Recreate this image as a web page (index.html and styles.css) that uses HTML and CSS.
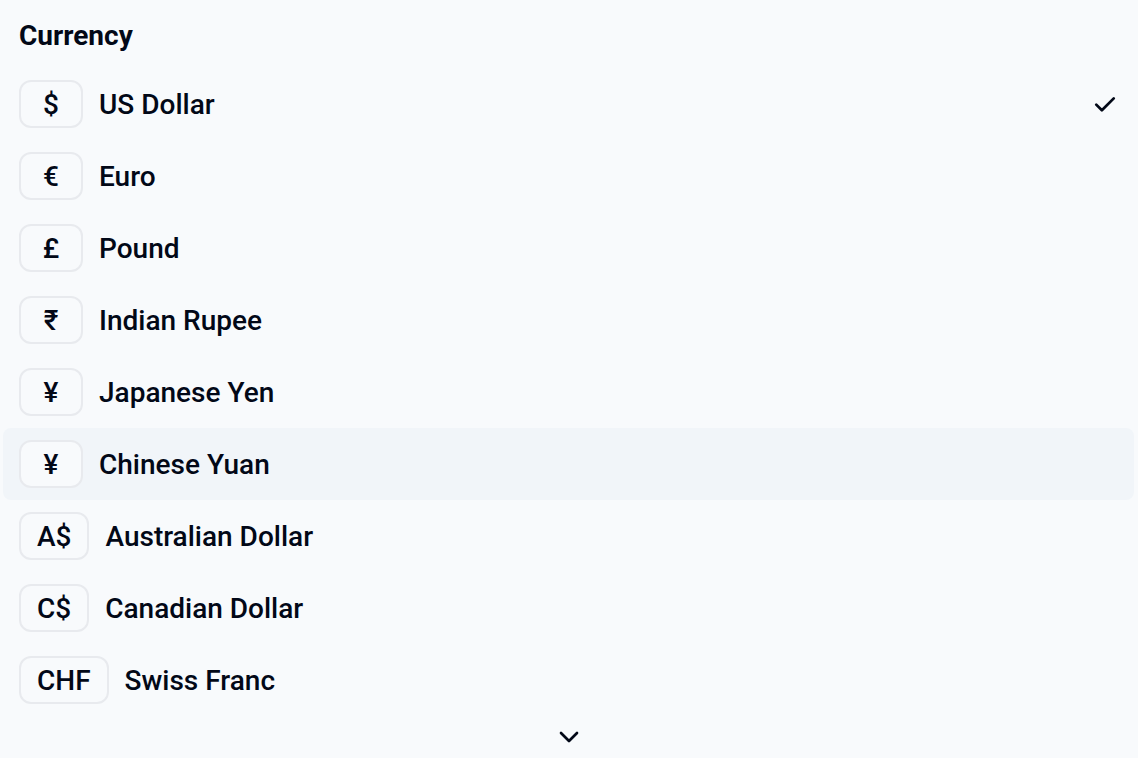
FILE: index.html
```html
<!DOCTYPE html>
<html lang="en">
<head>
<meta charset="utf-8">
<title>Currency</title>
<link rel="stylesheet" href="styles.css">
</head>
<body>
<div class="panel">
  <div class="title">Currency</div>
  <ul class="list">
    <li class="item"><span class="sym">$</span><span class="label">US Dollar</span>
      <svg class="check" viewBox="0 0 24 24" width="24" height="24"><path d="M5 12.5l4.5 4.5L19 7.5" fill="none" stroke="currentColor" stroke-width="2.2" stroke-linecap="round" stroke-linejoin="round"/></svg>
    </li>
    <li class="item"><span class="sym">€</span><span class="label">Euro</span></li>
    <li class="item"><span class="sym">£</span><span class="label">Pound</span></li>
    <li class="item"><span class="sym">₹</span><span class="label">Indian Rupee</span></li>
    <li class="item"><span class="sym">¥</span><span class="label">Japanese Yen</span></li>
    <li class="item active"><span class="sym">¥</span><span class="label">Chinese Yuan</span></li>
    <li class="item"><span class="sym">A$</span><span class="label">Australian Dollar</span></li>
    <li class="item"><span class="sym">C$</span><span class="label">Canadian Dollar</span></li>
    <li class="item"><span class="sym">CHF</span><span class="label">Swiss Franc</span></li>
  </ul>
  <div class="more">
    <svg viewBox="0 0 24 24" width="24" height="24"><path d="M6 9l6 6 6-6" fill="none" stroke="currentColor" stroke-width="2" stroke-linecap="round" stroke-linejoin="round"/></svg>
  </div>
</div>
</body>
</html>
```
FILE: styles.css
```css
html, body {
  margin: 0;
  padding: 0;
  background: #f8fafc;
}
body {
  font-family: Roboto, "Liberation Sans", sans-serif;
  color: #020817;
}
.panel {
  width: 1138px;
  height: 758px;
  overflow: hidden;
  padding: 0 4px 0 3px;
  box-sizing: border-box;
}
.title {
  height: 68px;
  line-height: 72px;
  padding: 0 16px;
  font-size: 28px;
  font-weight: 700;
  box-sizing: border-box;
}
.list {
  list-style: none;
  margin: 0;
  padding: 0;
}
.item {
  display: flex;
  align-items: center;
  gap: 16px;
  height: 72px;
  padding: 0 16px;
  border-radius: 8px;
  box-sizing: border-box;
  font-size: 28px;
  font-weight: 500;
}
.item.active {
  background: #f1f5f9;
}
.sym {
  display: flex;
  align-items: center;
  justify-content: center;
  min-width: 64px;
  height: 48px;
  padding: 0 16px;
  box-sizing: border-box;
  border: 2px solid #e8eaee;
  border-radius: 12px;
  background: #f8fafc;
  font-weight: 500;
}
.label {
  flex: 1;
}
.check {
  width: 30px;
  height: 30px;
  color: #020817;
  margin-right: -2px;
}
.more {
  display: flex;
  justify-content: center;
  align-items: center;
  height: 42px;
  color: #020817;
}
.more svg {
  width: 32px;
  height: 32px;
}
```
